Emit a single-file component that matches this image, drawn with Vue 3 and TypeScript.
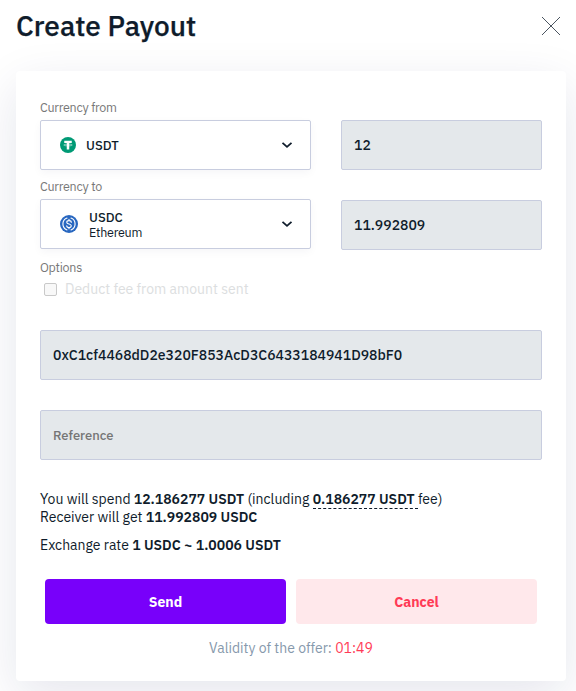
<script setup lang="ts">
import { ref } from 'vue'

const amountFrom = ref('12')
const amountTo = ref('11.992809')
const address = ref('0xC1cf4468dD2e320F853AcD3C6433184941D98bF0')
const reference = ref('')
const deductFee = ref(false)
const timeLeft = ref('01:49')
</script>

<template>
  <main class="page">
    <header class="head">
      <h1 class="title">Create Payout</h1>
      <button class="close" type="button" aria-label="Close">
        <svg width="20" height="20" viewBox="0 0 20 20"><path d="M1 1L19 19M19 1L1 19" /></svg>
      </button>
    </header>

    <section class="card">
      <div class="row">
        <div class="currency">
          <span class="label">Currency from</span>
          <button class="select" type="button">
            <svg class="coin" width="16" height="16" viewBox="0 0 32 32">
              <circle cx="16" cy="16" r="16" fill="#009a75" />
              <path fill="#fff" d="M8.500 7.500h15v4.500h-5v13h-5v-13h-5z" />
              <ellipse cx="16" cy="16" rx="8.500" ry="1.800" fill="none" stroke="#fff" stroke-width="1" />
            </svg>
            <span class="names"><b class="symbol">USDT</b></span>
            <svg class="chevron" width="12" height="8" viewBox="0 0 12 8"><path d="M1.500 1.800L6 5.800L10.500 1.800" /></svg>
          </button>
        </div>
        <input v-model="amountFrom" class="field amount" disabled />
      </div>

      <div class="row second">
        <div class="currency">
          <span class="label">Currency to</span>
          <button class="select" type="button">
            <svg class="coin" width="18" height="18" viewBox="0 0 32 32">
              <circle cx="16" cy="16" r="16" fill="#2867c0" />
              <g fill="none" stroke="#fff" stroke-width="2" stroke-linecap="round">
                <path d="M12.500 5.500a11.200 11.200 0 0 0 0 21M19.500 5.500a11.200 11.200 0 0 1 0 21" />
                <path d="M20 13c0-2-1.500-3.100-4-3.100s-4 1.100-4 3.100c0 4.200 8 2 8 6.100 0 2-1.600 3.100-4 3.100s-4-1.200-4-3.200M16 7.500v2.300M16 22.200v2.300" />
              </g>
            </svg>
            <span class="names stacked">
              <b class="symbol">USDC</b>
              <span class="network">Ethereum</span>
            </span>
            <svg class="chevron" width="12" height="8" viewBox="0 0 12 8"><path d="M1.500 1.800L6 5.800L10.500 1.800" /></svg>
          </button>
        </div>
        <input v-model="amountTo" class="field amount" disabled />
      </div>

      <span class="label options">Options</span>
      <label class="check">
        <input v-model="deductFee" class="box" type="checkbox" disabled />
        <span class="check-text">Deduct fee from amount sent</span>
      </label>

      <input v-model="address" class="field wide address" disabled />
      <input v-model="reference" class="field wide reference" placeholder="Reference" disabled />

      <div class="summary">
        <p class="line spend">You will spend <b>12.186277 USDT</b> (including <span class="fee"><b>0.186277 USDT</b>&nbsp;</span>fee)</p>
        <p class="line receive">Receiver will get <b>11.992809 USDC</b></p>
        <p class="line rate">Exchange rate <b>1 USDC ~ 1.0006 USDT</b></p>
      </div>

      <div class="actions">
        <button class="btn send" type="button">Send</button>
        <button class="btn cancel" type="button">Cancel</button>
      </div>
      <p class="validity">Validity of the offer: <span class="time">{{ timeLeft }}</span></p>
    </section>
  </main>
</template>

<style>
body {
  background: #fff;
  overflow: hidden;
}
</style>

<style scoped>
* {
  box-sizing: border-box;
}
.page {
  height: 691px;
  padding: 0 10px 0 16px;
  color: #0f1c2b;
  font-family: "IBM Plex Sans", Roboto, "Liberation Sans", sans-serif;
  font-size: 14px;
}
.head {
  display: flex;
  justify-content: space-between;
  height: 71px;
}
.title {
  margin: 8px 0 0;
  font-size: 28px;
  line-height: 36px;
  font-weight: 500;
  -webkit-text-stroke: 0.25px #0f1c2b;
}
.close {
  width: 20px;
  height: 20px;
  margin: 16px 5px 0 0;
  padding: 0;
  border: 0;
  background: none;
}
.close svg {
  display: block;
}
.close path {
  stroke: #4b5560;
  stroke-width: 1;
}
.card {
  height: 610px;
  padding: 29px 24px 0;
  border-radius: 4px;
  background: #fff;
  box-shadow: 0 15px 50px rgba(20, 30, 90, 0.11);
}
.row {
  display: flex;
  justify-content: space-between;
  align-items: flex-end;
  height: 70px;
}
.second {
  height: 80px;
}
.currency {
  width: 271px;
}
.second .currency {
  padding-bottom: 1px;
}
.label {
  display: block;
  height: 20px;
  color: #777;
  font-size: 12.5px;
  letter-spacing: -0.25px;
  line-height: 15px;
}
.select {
  display: flex;
  align-items: center;
  width: 100%;
  height: 50px;
  padding: 0 17px 0 19px;
  border: 1px solid #c8cddf;
  border-radius: 2px;
  background: #fff;
  box-shadow: 0 3px 8px rgba(20, 30, 75, 0.04);
  color: inherit;
  font: inherit;
  text-align: left;
}
.coin {
  flex: none;
}
.names {
  flex: 1;
  display: flex;
  flex-direction: column;
  padding-left: 10px;
  line-height: 14px;
}
.stacked {
  padding-left: 11px;
}
.symbol {
  padding-top: 1px;
  font-size: 13px;
  font-weight: 500;
}
.network {
  font-size: 12.5px;
  letter-spacing: -0.25px;
}
.chevron path {
  fill: none;
  stroke: #0f1c2b;
  stroke-width: 1.8;
}
.field {
  height: 50px;
  padding: 0 12px;
  border: 1px solid #c8cddf;
  border-radius: 2px;
  background: #e4e8eb;
  color: #0f1c2b;
  font-family: inherit;
  font-size: 14px;
  font-weight: 500;
}
.amount {
  width: 201px;
}
.wide {
  display: block;
  width: 100%;
}
.options {
  margin-top: 10px;
}
.check {
  display: flex;
  align-items: center;
  height: 19px;
  padding-left: 4px;
  gap: 8px;
  color: #dcdee0;
}
.check-text {
  padding-bottom: 2px;
  line-height: 18px;
}
.box {
  appearance: none;
  width: 13px;
  height: 13px;
  margin: 0;
  border: 1px solid #c9c9c9;
  border-radius: 2px;
  background: #f8f8f8;
}
.address {
  margin-top: 31px;
}
.reference {
  margin-top: 30px;
}
.reference::placeholder {
  color: #757575;
  font-size: 13px;
}
.summary {
  margin-top: 30px;
}
.line {
  margin: 0;
  line-height: 18px;
  white-space: nowrap;
}
.line b {
  font-weight: 600;
}
.fee {
  display: inline-block;
  height: 19px;
  margin-bottom: -1px;
  border-bottom: 1px dashed #0f1c2b;
}
.rate {
  margin-top: 10px;
}
.actions {
  display: flex;
  gap: 10px;
  padding: 0 5px;
  margin-top: 25px;
}
.btn {
  flex: 1;
  height: 45px;
  border: 0;
  border-radius: 4px;
  font: 700 14px/18px "IBM Plex Sans", Roboto, "Liberation Sans", sans-serif;
}
.send {
  background: #7800fa;
  color: #fff;
}
.cancel {
  background: #ffe8eb;
  color: #ff3b56;
}
.validity {
  margin: 15px 0 0;
  color: #8699ac;
  line-height: 18px;
  text-align: center;
}
.time {
  color: #ff3b56;
}
</style>
